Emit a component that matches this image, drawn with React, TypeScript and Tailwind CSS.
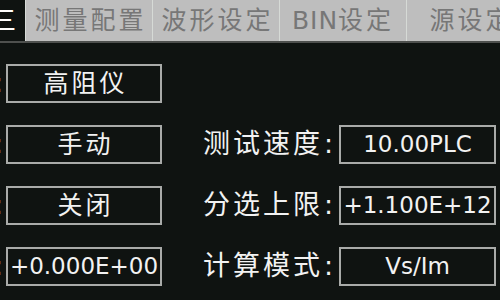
import React from "react";

const FONT = { fontFamily: '"DejaVu Sans", "Noto Sans CJK SC", sans-serif' };

const tabs = ["测量配置", "波形设定", "BIN设定", "源设定"];

const rows = [
  { l: "测量功能:", lv: "高阻仪", r: "", rv: "" },
  { l: "触发方式:", lv: "手动", r: "测试速度:", rv: "10.00PLC" },
  { l: "比较功能:", lv: "关闭", r: "分选上限:", rv: "+1.100E+12" },
  { l: "分选下限:", lv: "+0.000E+00", r: "计算模式:", rv: "Vs/Im" },
];

function Box({ v, cls }: { v: string; cls: string }) {
  const cjk = /[\u4e00-\u9fff]/.test(v);
  return (
    <div
      className={`${cls} h-[39px] border-2 border-[#a9aba9] flex items-center justify-center text-[#f2f2f2] whitespace-nowrap overflow-hidden ${
        cjk ? "text-[25px] tracking-[3px] pl-[3px]" : "text-[23px]"
      }`}
    >
      {v}
    </div>
  );
}

export default function App() {
  return (
    <div
      className="w-[500px] h-[300px] bg-[#0f1311] overflow-hidden flex flex-col"
      style={FONT}
    >
      <div className="h-[43px] shrink-0 flex border-b-2 border-[#4e504e] bg-[#bebebe]">
        <div className="-ml-[101px] w-[126px] shrink-0 bg-[#0f1311] text-white text-[25px] tracking-[3px] flex items-center justify-end pr-[6px] whitespace-nowrap overflow-hidden">
          测量三
        </div>
        {tabs.map((t) => (
          <div
            key={t}
            className="w-[127px] shrink-0 border-l border-[#d6dad6] text-[#777777] text-[25px] flex items-center justify-center whitespace-nowrap"
          >
            {t.startsWith("BIN") ? (
              <span>
                <span className="tracking-[1px]">BIN</span>
                <span className="tracking-[3px]">设定</span>
              </span>
            ) : (
              <span className="tracking-[3px] pl-[3px]">{t}</span>
            )}
          </div>
        ))}
      </div>
      <div className="flex flex-col gap-[22px] pt-[21px]">
        {rows.map((r, i) => (
          <div key={i} className="flex items-center h-[39px]">
            <div className="-ml-[137px] w-[143px] shrink-0 text-[#f2f2f2] text-[27px] tracking-[3px] whitespace-nowrap text-right">
              {r.l}
            </div>
            <Box v={r.lv} cls="w-[156px] shrink-0" />
            <div className="w-[41px] shrink-0" />
            {r.r ? (
              <>
                <div className="w-[136px] shrink-0 text-[#f2f2f2] text-[27px] whitespace-nowrap">
                  <span className="tracking-[3px]">{r.r.slice(0, -1)}</span>
                  <span className="pl-[1px]">:</span>
                </div>
                <Box v={r.rv} cls="w-[157px] shrink-0" />
              </>
            ) : null}
          </div>
        ))}
      </div>
    </div>
  );
}
